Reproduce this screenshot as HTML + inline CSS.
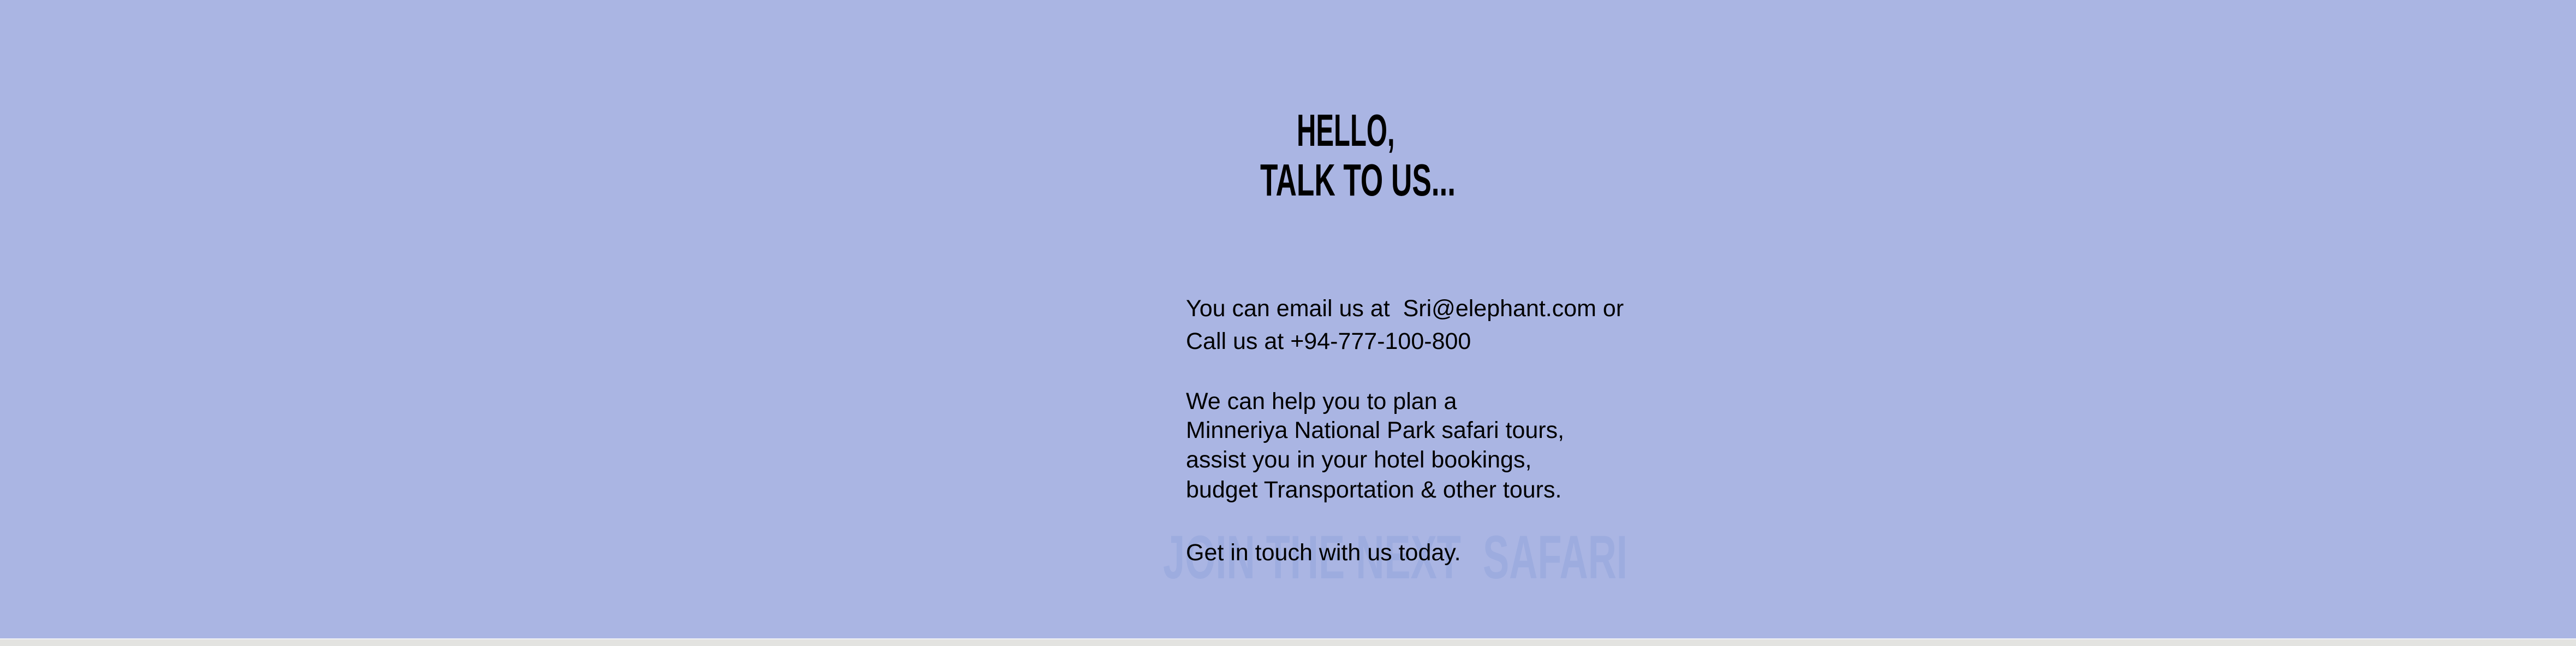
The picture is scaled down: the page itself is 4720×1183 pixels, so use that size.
<!DOCTYPE html>
<html><head><meta charset="utf-8"><style>
html,body{margin:0;padding:0}
body{width:4720px;height:1183px;position:relative;overflow:hidden;background:#e3e3e0;font-family:"Liberation Sans",sans-serif;color:#000}
#bg{position:absolute;left:0;top:0;width:4720px;height:1169px;background:#aab5e3;border-bottom:2px solid #eef0f6}
.t{position:absolute;white-space:nowrap;transform-origin:0 0}
.h{font-weight:bold;font-size:83px;line-height:83px}
.b{font-size:43px;line-height:44px}
.p{font-size:43px;line-height:43px}
</style></head><body>
<div id="bg"></div>
<div class="t" style="left:2131px;top:965px;font-weight:bold;font-size:112px;line-height:112px;color:#9dacdf;transform:scaleX(0.645)">JOIN THE NEXT&nbsp;&nbsp;SAFARI</div>
<div class="t h" style="left:2376px;top:197px;transform:scaleX(0.59)">HELLO,</div>
<div class="t h" style="left:2309px;top:288px;transform:scaleX(0.64)">TALK TO US...</div>
<div class="t b" style="left:2173px;top:543px">You can email us at&nbsp; <span style="font-size:43px">Sri@elephant.com</span> or</div>
<div class="t b" style="left:2173px;top:603px">Call us at +94-777-100-800</div>
<div class="t p" style="left:2173px;top:714px">We can help you to plan a</div>
<div class="t p" style="left:2173px;top:767px">Minneriya National Park safari tours,</div>
<div class="t p" style="left:2173px;top:821px">assist you in your hotel bookings,</div>
<div class="t p" style="left:2173px;top:876px">budget Transportation &amp; other tours.</div>
<div class="t p" style="left:2173px;top:991px">Get in touch with us today.</div>
</body></html>
